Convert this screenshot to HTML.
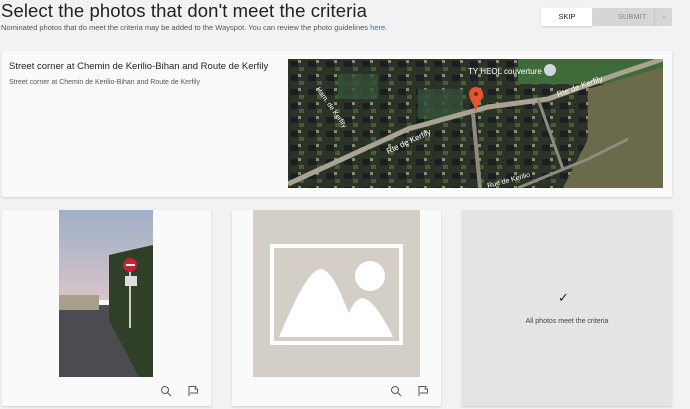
<!DOCTYPE html><html><head><style>
body{margin:0;width:690px;height:409px;background:#f2f2f2;font-family:"Liberation Sans",sans-serif;position:relative;overflow:hidden;color:#222}
.a{position:absolute}
.card{background:#fafafa;box-shadow:0 1px 2px rgba(0,0,0,.15);border-radius:2px}
</style></head><body>
<div class="a" style="left:1px;top:0px;font-size:18.5px;line-height:22px;letter-spacing:0.1px">Select the photos that don't meet the criteria</div>
<div class="a" style="left:1px;top:23px;font-size:7.5px;color:#555">Nominated photos that do meet the criteria may be added to the Wayspot. You can review the photo guidelines <span style="color:#2a6fd6">here</span>.</div>
<div class="a card" style="left:541px;top:8px;width:52px;height:18px;background:#fff;font-size:7.5px;text-align:center;line-height:18px">SKIP</div>
<div class="a" style="left:592px;top:8px;width:80px;height:18px;background:#d6d6d6;border-radius:2px;font-size:7.5px;color:#888;line-height:18px"><span style="margin-left:26px">SUBMIT</span><span class="a" style="left:62px;top:0;border-left:1px solid #c4c4c4;height:18px;width:18px;text-align:center;font-size:6px">⌄</span></div>
<div class="a card" style="left:2px;top:51px;width:670px;height:146px"></div>
<div class="a" style="left:9px;top:61px;font-size:9.5px">Street corner at Chemin de Kerilio-Bihan and Route de Kerfily</div>
<div class="a" style="left:9px;top:79px;font-size:7px;color:#555">Street corner at Chemin de Kerilio-Bihan and Route de Kerfily</div>
<svg class="a" style="left:288px;top:59px" width="375" height="129" viewBox="0 0 375 129">
<defs><pattern id="h" width="18" height="14" patternUnits="userSpaceOnUse"><rect width="18" height="14" fill="#2b3327"/><rect x="2" y="2" width="8" height="6" fill="#1c1f22"/><rect x="11" y="8" width="5" height="4" fill="#4a5a3a"/><rect x="10" y="1" width="3" height="3" fill="#8a8a7a"/></pattern></defs>
<rect width="375" height="129" fill="url(#h)"/>
<rect x="230" y="0" width="145" height="25" fill="#3f6b3a"/>
<polygon points="300,30 375,8 375,129 275,129 300,80" fill="#6b6b4c"/>
<rect x="50" y="15" width="40" height="25" fill="#36503a" opacity=".8"/>
<rect x="130" y="30" width="45" height="30" fill="#36503a" opacity=".8"/>
<path d="M0,125 L120,70 L200,48 L260,40 L330,15 L375,0" stroke="#a9a391" stroke-width="5" fill="none"/>
<path d="M185,55 L192,129" stroke="#8e8a7e" stroke-width="4"/>
<path d="M230,129 L300,100 L340,80" stroke="#8e8a7e" stroke-width="3" fill="none"/>
<path d="M250,40 L275,110" stroke="#8e8a7e" stroke-width="3"/>
<text x="180" y="15" font-size="8" fill="#fff">TY HEOL couverture</text>
<circle cx="262" cy="11" r="6" fill="#d0d6dc"/>
<text x="100" y="95" font-size="8" fill="#fff" transform="rotate(-25 100 95)">Rte de Kerfily</text>
<text x="270" y="38" font-size="8" fill="#fff" transform="rotate(-20 270 38)">Rte de Kerfily</text>
<text x="200" y="129" font-size="7" fill="#fff" transform="rotate(-15 200 129)">Rue de Kerilio</text>
<text x="28" y="30" font-size="7" fill="#fff" transform="rotate(55 28 30)">Ham. de Kerfily</text>
<path d="M188,28 a7,7 0 0 1 7,7 c0,6 -7,12 -7,20 c0,-8 -7,-14 -7,-20 a7,7 0 0 1 7,-7z" fill="#e8532b"/>
<circle cx="188" cy="35" r="2" fill="#7a2a14"/>
</svg>
<div class="a card" style="left:2px;top:210px;width:209px;height:196px"></div>
<svg class="a" style="left:59px;top:210px" width="94" height="167"><defs><linearGradient id="s" x1="0" y1="0" x2="0" y2="1"><stop offset="0" stop-color="#9eb0c8"/><stop offset="1" stop-color="#d8c4c8"/></linearGradient></defs><rect width="94" height="90" fill="url(#s)"/><rect y="95" width="94" height="72" fill="#4a4c50"/><polygon points="50,45 94,35 94,167 80,167 50,110" fill="#2f3f28"/><rect x="0" y="85" width="40" height="15" fill="#a89f8a"/><rect x="70" y="60" width="2" height="58" fill="#ccc"/><circle cx="71" cy="55" r="7" fill="#c82030"/><rect x="67" y="54" width="9" height="2" fill="#fff"/><rect x="66" y="66" width="12" height="10" fill="#ddd"/></svg>
<svg class="a" style="left:160px;top:385px" width="40" height="12" fill="none" stroke="#555" stroke-width="1"><circle cx="5" cy="5" r="3.5"/><path d="M7.5,7.5 L11,11"/><path d="M29,11 V1.5 H36 L35,4 H37.5 V8 H30"/></svg>
<div class="a card" style="left:232px;top:210px;width:209px;height:196px"></div>
<svg class="a" style="left:253px;top:210px" width="167" height="167"><rect width="167" height="167" fill="#d3cfc7"/><rect x="19" y="36" width="129" height="97" fill="none" stroke="#fff" stroke-width="4"/><circle cx="117" cy="66" r="15" fill="#fff"/><path d="M26,127 C40,95 55,60 68,59 C80,60 90,90 96,103 C100,93 105,88 110,88 C120,90 132,110 140,127Z" fill="#fff"/></svg>
<svg class="a" style="left:390px;top:385px" width="40" height="12" fill="none" stroke="#555" stroke-width="1"><circle cx="5" cy="5" r="3.5"/><path d="M7.5,7.5 L11,11"/><path d="M29,11 V1.5 H36 L35,4 H37.5 V8 H30"/></svg>
<div class="a" style="left:462px;top:210px;width:210px;height:196px;background:#e4e4e4;box-shadow:0 1px 2px rgba(0,0,0,.15)"></div>
<div class="a" style="left:558px;top:290px;font-size:13px;color:#222">✓</div>
<div class="a" style="left:462px;top:318px;width:210px;text-align:center;font-size:7px;color:#444">All photos meet the criteria</div>
</body></html>
